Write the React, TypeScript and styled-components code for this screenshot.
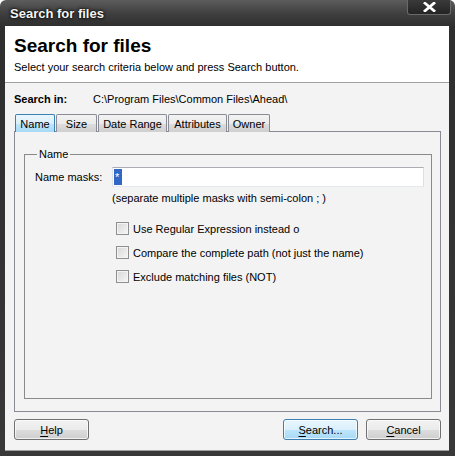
import styled, { createGlobalStyle } from "styled-components";

const GlobalStyle = createGlobalStyle`
  html, body {
    margin: 0;
    padding: 0;
    background: #ffffff;
  }
  body {
    font-family: "Liberation Sans", Arial, sans-serif;
    font-size: 11px;
    color: #000;
  }
`;

const TABS = [
  { label: "Name", width: 40 },
  { label: "Size", width: 41 },
  { label: "Date Range", width: 69 },
  { label: "Attributes", width: 59 },
  { label: "Owner", width: 42 },
];

const OPTIONS = [
  "Use Regular Expression instead o",
  "Compare the complete path (not just the name)",
  "Exclude matching files (NOT)",
];

export default function App() {
  return (
    <>
      <GlobalStyle />
      <Window>
        <TitleBar>
          <TitleText>Search for files</TitleText>
          <CloseButton aria-label="Close">
            <svg width="13" height="10" viewBox="0 0 13 10">
              <path
                d="M2 1.2 L11 8.8 M11 1.2 L2 8.8"
                stroke="#ffffff"
                strokeWidth="2.8"
                strokeLinecap="square"
              />
            </svg>
          </CloseButton>
        </TitleBar>
        <Client>
          <Header>
            <Heading>Search for files</Heading>
            <SubHeading>
              Select your search criteria below and press Search button.
            </SubHeading>
          </Header>
          <Body>
            <SearchInRow>
              <SearchInLabel>Search in:</SearchInLabel>
              <span>C:\Program Files\Common Files\Ahead\</span>
            </SearchInRow>
            <TabStrip>
              {TABS.map((t, i) => (
                <Tab key={t.label} $active={i === 0} $width={t.width}>
                  {t.label}
                </Tab>
              ))}
            </TabStrip>
            <TabPanel>
              <GroupBox>
                <Legend>Name</Legend>
                <MaskRow>
                  <MaskLabel>Name masks:</MaskLabel>
                  <MaskInput>
                    <Selected>*</Selected>
                  </MaskInput>
                </MaskRow>
                <Hint>(separate multiple masks with semi-colon ; )</Hint>
                <Options>
                  {OPTIONS.map((o) => (
                    <CheckRow key={o}>
                      <CheckBox />
                      <span>{o}</span>
                    </CheckRow>
                  ))}
                </Options>
              </GroupBox>
            </TabPanel>
            <ButtonRow>
              <Button>
                <u>H</u>elp
              </Button>
              <Spacer />
              <Button $primary>
                <u>S</u>earch...
              </Button>
              <Button>
                <u>C</u>ancel
              </Button>
            </ButtonRow>
          </Body>
        </Client>
      </Window>
    </>
  );
}

const Window = styled.div`
  width: 455px;
  height: 456px;
  box-sizing: border-box;
  display: flex;
  flex-direction: column;
  border-radius: 6px 6px 0 0;
  background: linear-gradient(#5c5c5c 0px, #3e3e3e 14px, #2e2e2e 27px, #383838 100%);
  overflow: hidden;
`;

const TitleBar = styled.div`
  height: 26px;
  display: flex;
  align-items: flex-start;
  padding-left: 10px;
  box-sizing: border-box;
`;

const TitleText = styled.div`
  margin-top: 6px;
  flex: 1;
  font-weight: bold;
  font-size: 13px;
  line-height: 16px;
  color: #f4f4f4;
  text-shadow: 0 0 4px #000, 0 0 2px #000;
`;

const CloseButton = styled.div`
  width: 44px;
  height: 15px;
  margin-right: 4px;
  box-sizing: border-box;
  display: flex;
  align-items: center;
  justify-content: center;
  border: 1px solid #6a6a6a;
  border-top: none;
  border-radius: 0 0 3px 3px;
  background: linear-gradient(#3a3a3a, #242424);
`;

const Client = styled.div`
  flex: 1;
  margin: 0 6px 5px 5px;
  display: flex;
  flex-direction: column;
  background: #f3f3f3;
  border-bottom: 1px solid #a0a0a0;
`;

const Header = styled.div`
  height: 57px;
  box-sizing: border-box;
  background: #ffffff;
  border-bottom: 1px solid #a0a0a0;
  padding: 8px 0 0 9px;
`;

const Heading = styled.div`
  font-size: 19px;
  font-weight: bold;
  line-height: 24px;
`;

const SubHeading = styled.div`
  margin-top: 3px;
  line-height: 13px;
`;

const Body = styled.div`
  flex: 1;
  display: flex;
  flex-direction: column;
  padding: 8px 8px 0 9px;
`;

const SearchInRow = styled.div`
  display: flex;
  line-height: 14px;
  height: 16px;
  align-items: center;
`;

const SearchInLabel = styled.span`
  font-weight: bold;
  width: 79px;
`;

const TabStrip = styled.div`
  display: flex;
  margin-top: 7px;
  padding-left: 1px;
  gap: 1px;
  height: 17px;
`;

const Tab = styled.div<{ $active?: boolean; $width: number }>`
  box-sizing: border-box;
  width: ${(p) => p.$width}px;
  height: 18px;
  display: flex;
  align-items: center;
  justify-content: center;
  border: 1px solid ${(p) => (p.$active ? "#3c7fb1" : "#898c95")};
  border-bottom: none;
  border-radius: 2px 2px 0 0;
  background: ${(p) =>
    p.$active
      ? "linear-gradient(#eaf6fd 0%, #d9f0fc 50%, #bee6fd 51%, #a7d9f5 100%)"
      : "linear-gradient(#f2f2f2 0%, #ebebeb 50%, #dddddd 51%, #cfcfcf 100%)"};
  position: relative;
  z-index: 1;
`;

const TabPanel = styled.div`
  height: 281px;
  box-sizing: border-box;
  border: 1px solid #898c95;
  background: #f3f3f3;
  padding: 16px 8px 0 9px;
`;

const GroupBox = styled.fieldset`
  margin: 0;
  height: 251px;
  box-sizing: border-box;
  border: 1px solid #8a8a8a;
  padding: 7px 0 0 10px;
`;

const Legend = styled.legend`
  padding: 0 2px;
  margin-left: 2px;
  line-height: 12px;
`;

const MaskRow = styled.div`
  display: flex;
  align-items: center;
`;

const MaskLabel = styled.span`
  width: 77px;
`;

const MaskInput = styled.div`
  width: 312px;
  height: 20px;
  box-sizing: border-box;
  border: 1px solid #abadb3;
  border-color: #abadb3 #dbdfe6 #e3e9ef #e2e3ea;
  background: #fff;
  padding: 1px 1px;
  display: flex;
`;

const Selected = styled.span`
  background: #3168c6;
  color: #fff;
  width: 7px;
  line-height: 16px;
  padding-left: 1px;
`;

const Hint = styled.div`
  margin: 5px 0 0 77px;
  line-height: 13px;
`;

const Options = styled.div`
  margin: 17px 0 0 81px;
  display: flex;
  flex-direction: column;
  gap: 11px;
`;

const CheckRow = styled.div`
  display: flex;
  align-items: center;
  gap: 4px;
  height: 13px;
`;

const CheckBox = styled.span`
  width: 13px;
  height: 13px;
  box-sizing: border-box;
  border: 1px solid #8f8f8f;
  background: linear-gradient(135deg, #d8d8d8, #f6f6f6);
  box-shadow: inset 0 0 0 1px #f4f4f4;
`;

const ButtonRow = styled.div`
  display: flex;
  gap: 8px;
  margin-top: 7px;
`;

const Spacer = styled.div`
  flex: 1;
`;

const Button = styled.div<{ $primary?: boolean }>`
  width: 75px;
  height: 21px;
  box-sizing: border-box;
  display: flex;
  align-items: center;
  justify-content: center;
  border: 1px solid ${(p) => (p.$primary ? "#3c7fb1" : "#707070")};
  border-radius: 3px;
  background: ${(p) =>
    p.$primary
      ? "linear-gradient(#eaf6fd 0%, #d9f0fc 50%, #bee6fd 51%, #a7d9f5 100%)"
      : "linear-gradient(#f2f2f2 0%, #ebebeb 50%, #dddddd 51%, #cfcfcf 100%)"};
  box-shadow: inset 0 0 0 1px rgba(255, 255, 255, 0.7);

  & u {
    text-underline-offset: 2px;
  }
`;
